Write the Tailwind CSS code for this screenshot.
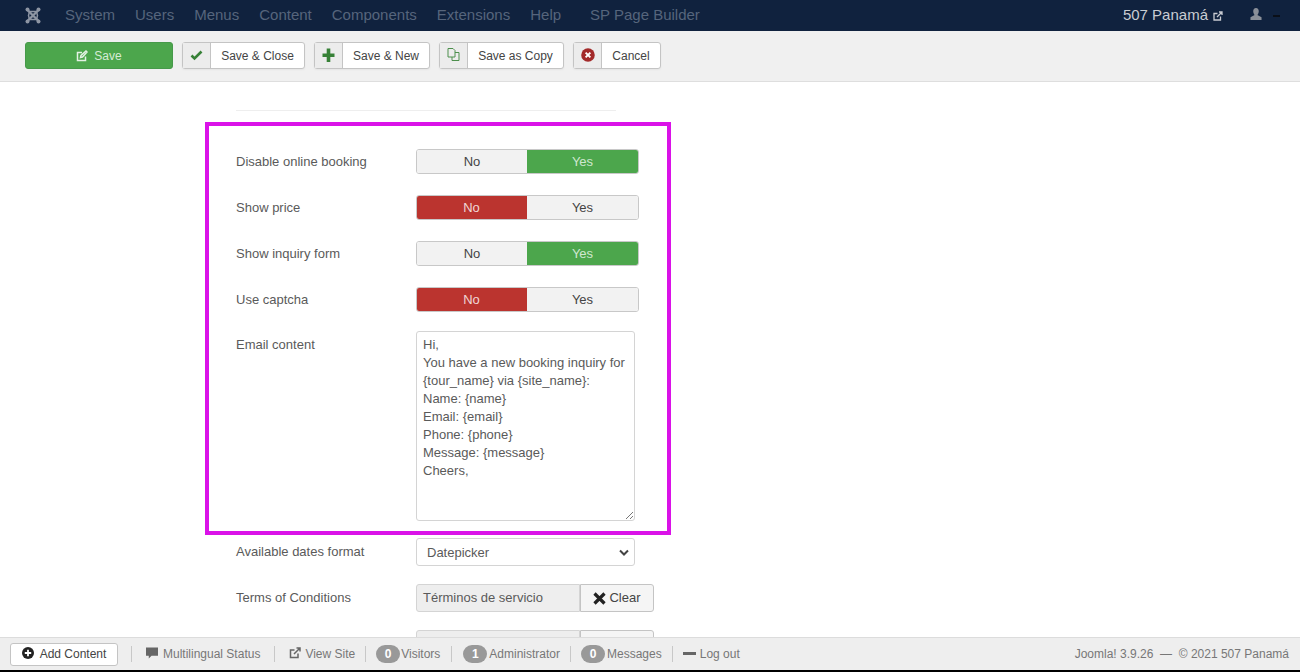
<!DOCTYPE html>
<html><head><meta charset="utf-8">
<script src="https://cdn.jsdelivr.net/npm/@tailwindcss/browser@4"></script>
</head>
<body class="bg-black">
<div class="relative w-[1300px] h-[672px] overflow-hidden flex flex-col bg-white font-['Liberation_Sans',Arial,sans-serif] text-[13px] text-[#5a5a5a]">
  <nav class="h-[31px] shrink-0 bg-[#10223e] flex items-center text-[15px] text-[#56657c]">
    <svg class="ml-[25px] w-[16px] h-[17px]" viewBox="0 0 16 17" fill="none" stroke="#8d95a3"><path d="M2.500 3 13.500 14M13.500 3 2.500 14" stroke-width="2.400"/><path d="M4.500 4.500h7l1 4-1 4h-7l-1-4z" stroke-width="1.500"/><circle cx="2.500" cy="2.500" r="2" fill="#8d95a3" stroke="none"/><circle cx="13.500" cy="2.500" r="2" fill="#8d95a3" stroke="none"/><circle cx="2.500" cy="14.500" r="2" fill="#8d95a3" stroke="none"/><circle cx="13.500" cy="14.500" r="2" fill="#8d95a3" stroke="none"/></svg>
    <span class="ml-[24px]">System</span><span class="ml-[20px]">Users</span><span class="ml-[20px]">Menus</span><span class="ml-[20px]">Content</span><span class="ml-[20px]">Components</span><span class="ml-[20px]">Extensions</span><span class="ml-[20px]">Help</span><span class="ml-[29px]">SP Page Builder</span>
    <span class="ml-auto text-[#c9ccd2] flex items-center gap-[5px]">507 Panamá
      <svg class="w-[10px] h-[10px]" viewBox="0 0 10 10" fill="none" stroke="#c9ccd2" stroke-width="1.300"><path d="M7.500 5.500V9H1V2.500h3.500M4 6l5-5M6 1h3v3"/></svg>
    </span>
    <svg class="ml-[27px] w-[12px] h-[12px] -mt-[3px]" viewBox="0 0 13 13" fill="#8a8f98"><path d="M6.500 0c2 0 3 1.500 3 3.500S8.500 7 8 7.500l4.500 2.500v3H.5v-3L5 7.500C4.500 7 3.500 5.500 3.500 3.500S4.500 0 6.500 0z"/></svg>
    <span class="ml-[11px] mr-[20px] w-[7px] h-[2px] bg-[#0a0f18]"></span>
  </nav>

  <div class="h-[51px] shrink-0 bg-[#f0f0f0] border-b border-[#dedede] flex items-center pl-[25px] gap-[9px] text-[12px] text-[#444] pb-[1px]">
    <div class="w-[148px] h-[27px] rounded-[3px] bg-[#4ca64c] border border-[#46994a] text-[#d6ebd6] flex items-center justify-center gap-[6px]">
      <svg class="w-[12px] h-[12px]" viewBox="0 0 12 12" fill="none" stroke="#e4f1e4" stroke-width="1.500"><path d="M9.500 6.500V10.500H1.500V2.500H6M4.500 7.500l.5-2L10 1l1 1-4.500 5z"/></svg>
      <span>Save</span>
    </div>
    <div class="h-[27px] w-[123px] rounded-[3px] border border-[#c4c4c4] bg-white flex shadow-xs">
      <div class="w-[28px] bg-[#ececec] border-r border-[#c4c4c4] flex items-center justify-center"><svg class="w-[13px] h-[12px] -mt-[2px]" viewBox="0 0 13 12" fill="none" stroke="#378137" stroke-width="2.600"><path d="M1.500 6.500 4.500 9.500 11.500 2.500"/></svg></div>
      <span class="flex-1 flex items-center justify-center">Save &amp; Close</span>
    </div>
    <div class="h-[27px] w-[116px] rounded-[3px] border border-[#c4c4c4] bg-white flex shadow-xs">
      <div class="w-[28px] bg-[#ececec] border-r border-[#c4c4c4] flex items-center justify-center"><svg class="w-[13px] h-[14px] -mt-[2px]" viewBox="0 0 13 14" fill="#378137"><path d="M4.700 0.500h3.600v5h4.200v3.400H8.300v5H4.700v-5H.5V5.500h4.200z"/></svg></div>
      <span class="flex-1 flex items-center justify-center">Save &amp; New</span>
    </div>
    <div class="h-[27px] w-[125px] rounded-[3px] border border-[#c4c4c4] bg-white flex shadow-xs">
      <div class="w-[28px] bg-[#ececec] border-r border-[#c4c4c4] flex items-center justify-center"><svg class="w-[13px] h-[13px] -mt-[2px]" viewBox="0 0 13 13" fill="none" stroke="#4c8f4c" stroke-width="1"><path d="M1 .5h5l2 2V9H1zM8 4.500h4V12.500H5V9"/></svg></div>
      <span class="flex-1 flex items-center justify-center">Save as Copy</span>
    </div>
    <div class="h-[27px] w-[88px] rounded-[3px] border border-[#c4c4c4] bg-white flex shadow-xs">
      <div class="w-[28px] bg-[#ececec] border-r border-[#c4c4c4] flex items-center justify-center"><svg class="w-[14px] h-[14px] -mt-[2px]" viewBox="0 0 13 13"><circle cx="6.500" cy="6.500" r="6.300" fill="#a32a2a"/><path d="M4.300 4.300l4.400 4.400M8.700 4.300 4.300 8.700" stroke="#fff" stroke-width="1.800"/></svg></div>
      <span class="flex-1 flex items-center justify-center">Cancel</span>
    </div>
  </div>

  <main class="flex-1 min-h-0 overflow-hidden pl-[236px] pt-[28px]">
    <div class="w-[380px] h-px bg-[#eeeeee] mb-[38px]"></div>
    <div class="flex flex-col gap-[18px]">
      <div class="flex h-[28px]"><span class="w-[180px] leading-[26px]">Disable online booking</span>
        <div class="w-[223px] h-[25px] flex rounded-[3px] overflow-hidden border border-[#c8c8c8]"><span class="w-[110px] bg-[#f2f2f2] text-[#444] flex items-center justify-center">No</span><span class="flex-1 bg-[#4ca64c] text-[#cfe6cf] flex items-center justify-center">Yes</span></div></div>
      <div class="flex h-[28px]"><span class="w-[180px] leading-[26px]">Show price</span>
        <div class="w-[223px] h-[25px] flex rounded-[3px] overflow-hidden border border-[#c8c8c8]"><span class="w-[111px] -my-px -ml-px bg-[#bb342f] text-[#f0d7d6] flex items-center justify-center">No</span><span class="flex-1 bg-[#f2f2f2] text-[#444] flex items-center justify-center">Yes</span></div></div>
      <div class="flex h-[28px]"><span class="w-[180px] leading-[26px]">Show inquiry form</span>
        <div class="w-[223px] h-[25px] flex rounded-[3px] overflow-hidden border border-[#c8c8c8]"><span class="w-[110px] bg-[#f2f2f2] text-[#444] flex items-center justify-center">No</span><span class="flex-1 bg-[#4ca64c] text-[#cfe6cf] flex items-center justify-center">Yes</span></div></div>
      <div class="flex h-[28px]"><span class="w-[180px] leading-[26px]">Use captcha</span>
        <div class="w-[223px] h-[25px] flex rounded-[3px] overflow-hidden border border-[#c8c8c8]"><span class="w-[111px] -my-px -ml-px bg-[#bb342f] text-[#f0d7d6] flex items-center justify-center">No</span><span class="flex-1 bg-[#f2f2f2] text-[#444] flex items-center justify-center">Yes</span></div></div>
      <div class="flex h-[190px] -mt-[2px]"><span class="w-[180px] leading-[28px]">Email content</span>
        <div class="relative w-[219px] h-[190px] rounded-[3px] border border-[#d4d4d4] px-[6px] pt-[4px] leading-[18px] text-[#5a5a5a]">
          <p>Hi,</p><p>You have a new booking inquiry for</p><p>{tour_name} via {site_name}:</p><p>Name: {name}</p><p>Email: {email}</p><p>Phone: {phone}</p><p>Message: {message}</p><p>Cheers,</p>
          <svg class="absolute right-[1px] bottom-[1px] w-[8px] h-[8px]" viewBox="0 0 8 8" stroke="#777" stroke-width="1"><path d="M1 8 8 1M5 8 8 5"/></svg>
        </div></div>
      <div class="flex h-[28px] -mt-[1px]"><span class="w-[180px] leading-[28px]">Available dates format</span>
        <div class="w-[219px] h-[28px] rounded-[3px] border border-[#d4d4d4] flex items-center justify-between pl-[10px] pr-[5px] pt-[1px] text-[#5a5a5a]">Datepicker
          <svg class="w-[10px] h-[8px]" viewBox="0 0 10 8" fill="none" stroke="#444" stroke-width="2"><path d="M1 1.500 5 5.500 9 1.500"/></svg></div></div>
      <div class="flex h-[28px]"><span class="w-[180px] leading-[28px]">Terms of Conditions</span>
        <div class="flex h-[28px]"><span class="w-[164px] bg-[#eeeeee] border border-[#d4d4d4] rounded-l-[3px] pl-[6px] flex items-center">Términos de servicio</span>
          <span class="w-[74px] border border-[#c4c4c4] rounded-r-[3px] bg-[#f5f5f5] flex items-center justify-center gap-[3px] text-[#444]"><svg class="w-[13px] h-[13px]" viewBox="0 0 13 13" stroke="#222" stroke-width="3.200"><path d="M1.500 1.500 11.500 11.500M11.500 1.500 1.500 11.500"/></svg>Clear</span></div></div>
      <div class="flex h-[28px]"><span class="w-[180px]"></span>
        <div class="flex h-[28px]"><span class="w-[164px] bg-[#eeeeee] border border-[#d4d4d4] rounded-l-[3px]"></span>
          <span class="w-[74px] border border-[#c4c4c4] rounded-r-[3px] bg-[#f5f5f5]"></span></div></div>
    </div>
  </main>

  <footer class="h-[33px] shrink-0 bg-[#eeeeee] border-t border-[#dcdcdc] flex items-center text-[12px] text-[#777] pl-[10px] pr-[11px]">
    <div class="w-[108px] h-[23px] rounded-[3px] border border-[#c4c4c4] bg-white text-[#444] flex items-center justify-center gap-[6px]">
      <svg class="w-[12px] h-[12px] -mt-[2px]" viewBox="0 0 12 12"><circle cx="6" cy="6" r="6" fill="#222"/><path d="M6 2.800v6.400M2.800 6h6.400" stroke="#fff" stroke-width="1.800"/></svg>Add Content</div>
    <i class="w-px h-[16px] bg-[#c8c8c8] ml-[13px] mr-[14px]"></i>
    <svg class="w-[12px] h-[12px] mr-[5px] -mt-[2px]" viewBox="0 0 13 12" fill="#666"><path d="M0 0h13v9H6l-3 3V9H0z"/></svg>Multilingual Status
    <i class="w-px h-[16px] bg-[#c8c8c8] ml-[14px] mr-[14px]"></i>
    <svg class="w-[12px] h-[12px] mr-[4px] -mt-[2px]" viewBox="0 0 12 12" fill="none" stroke="#666" stroke-width="1.500"><path d="M9 6.500V10.500H1.500V3H5.500M5 7l5.500-5.500M7.500 1H11V4.500"/></svg>View Site
    <i class="w-px h-[16px] bg-[#c8c8c8] ml-[10px] mr-[10px]"></i>
    <span class="w-[24px] h-[18px] rounded-full bg-[#999] text-white font-bold flex items-center justify-center mr-[1px]">0</span>Visitors
    <i class="w-px h-[16px] bg-[#c8c8c8] ml-[11px] mr-[11px]"></i>
    <span class="w-[24px] h-[18px] rounded-full bg-[#999] text-white font-bold flex items-center justify-center mr-[2px]">1</span>Administrator
    <i class="w-px h-[16px] bg-[#c8c8c8] ml-[10px] mr-[10px]"></i>
    <span class="w-[24px] h-[18px] rounded-full bg-[#999] text-white font-bold flex items-center justify-center mr-[2px]">0</span>Messages
    <i class="w-px h-[16px] bg-[#c8c8c8] ml-[10px] mr-[10px]"></i>
    <span class="w-[13px] h-[3px] bg-[#666] mr-[4px] -mt-[2px]"></span>Log out
    <span class="ml-auto">Joomla! 3.9.26 &nbsp;—&nbsp; © 2021 507 Panamá</span>
  </footer>
  <div class="h-[2px] shrink-0 bg-black"></div>

  <div class="absolute left-[205px] top-[122px] w-[466px] h-[413px] border-[4px] border-[#da12e8] pointer-events-none"></div>
</div>
</body></html>
